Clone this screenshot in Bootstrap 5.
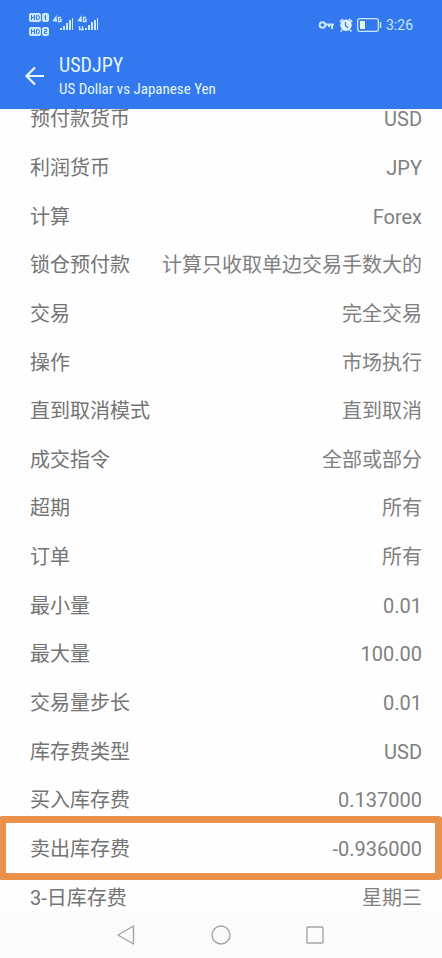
<!DOCTYPE html>
<html lang="zh-CN">
<head>
<meta charset="utf-8">
<meta name="viewport" content="width=device-width, initial-scale=1">
<title>USDJPY</title>
<link href="https://cdn.jsdelivr.net/npm/bootstrap@5.3.0/dist/css/bootstrap.min.css" rel="stylesheet">
<style>
body { font-family: Roboto, "Noto Sans CJK SC", sans-serif; color: #747474; background: #fefefe; }
.top-area { background: #3478f0; color: #e2f6fc; z-index: 2; margin-bottom: -14px; }
.status-line { height: 50px; padding: 0 29px 0 28px; font-size: 14px; color: #c9e9f8; }
.title-line { height: 59px; padding: 0 24px 8px; gap: 13px; }
.symbol-name { font-family: "Roboto Condensed", "Liberation Sans Narrow", Roboto, sans-serif; font-size: 20px; line-height: 26px; font-weight: 400; }
.symbol-text { font-family: "Roboto Condensed", "Liberation Sans Narrow", Roboto, sans-serif; font-size: 15px; line-height: 22px; font-weight: 400; }
.spec-row { padding: 0 20px 0 30px; font-size: 20px; line-height: 28px; }
.spec-row dt, .spec-row dd { font-weight: 400; }
.spec-row dd { color: #808080; }
.spec-marked::after { content: ""; position: absolute; inset: -9px 0 -7px -1px; border: 7px solid #e9914b; border-radius: 3px; }
.system-keys { background: #fbfbfb; margin-top: -11px; height: 47px; padding: 0 113px; z-index: 1; }
svg { display: block; }
</style>
<script src="https://cdn.jsdelivr.net/npm/bootstrap@5.3.0/dist/js/bootstrap.bundle.min.js"></script>
</head>
<body>
<div class="d-flex flex-column min-vh-100">
  <header class="top-area position-relative">
    <div class="status-line d-flex align-items-center justify-content-between">
      <svg width="74" height="26" viewBox="0 0 74 26" fill="#c9e9f8" aria-hidden="true">
        <rect x="1" y="1" width="12" height="9" rx="2"/><rect x="14" y="1" width="7" height="9" rx="2"/>
        <rect x="1" y="15" width="12" height="9" rx="2"/><rect x="14" y="15" width="7" height="9" rx="2"/>
        <g fill="none" stroke="#3478f0"><path d="M3.500 3v5M6.500 3v5M3.500 5.500h3M8.500 3.500v4h1q2 0 2-2t-2-2zM16.500 4.500l1-1v4.500"/><path d="M3.500 17v5M6.500 17v5M3.500 19.500h3M8.500 17.500v4h1q2 0 2-2t-2-2zM16 17.500h2.500v2H16.500v2H19"/></g>
        <g fill="none" stroke="#c9e9f8" stroke-width="1.300"><path d="M28 10V5l-2.500 3.500H29M33 5.500h-2.500v4H33V7.500h-1M53 10V5l-2.500 3.500H54M58 5.500h-2.500v4H58V7.500h-1M51.500 14v3.500h3V14M54.500 17.500l1.500 0"/></g>
        <path d="M32 16h2v2h-2zM35 14h2v4h-2zM38 11h2v7h-2zM41 8h2v10h-2zM44 6h1v12h-1zM57 16h2v2h-2zM60 13h2v5h-2zM63 10h2v8h-2zM66 8h2v10h-2zM69 6h1v12h-1z"/>
      </svg>
      <div class="d-flex align-items-center gap-1">
        <svg width="17" height="12" viewBox="0 0 17 12" fill="none" stroke="#c9e9f8" stroke-width="2" aria-hidden="true"><circle cx="4.500" cy="6" r="2.800"/><path d="M7.500 5.500H16M14 6v4M11 6v2"/></svg>
        <svg width="14" height="14" viewBox="0 0 14 14" aria-hidden="true"><circle cx="7" cy="7.300" r="5.700" fill="#dff3fb"/><path d="M.8 4L4 1M10 1l3.200 3M3 12l-1.300 1.500M11 12l1.300 1.500" stroke="#dff3fb" stroke-width="1.500"/><path d="M6.500 4v3.500L9 10" fill="none" stroke="#3478f0" stroke-width="1.300"/></svg>
        <svg width="25" height="14" viewBox="0 0 25 14" aria-hidden="true"><rect x=".7" y=".7" width="20.600" height="12.600" rx="2" fill="none" stroke="#c9e9f8" stroke-width="1.300"/><rect x="3" y="3" width="5" height="8" fill="#e2f6fc"/><path d="M23.500 4v6" stroke="#c9e9f8" stroke-width="1.500"/></svg>
        <span>3:26</span>
      </div>
    </div>
    <div class="title-line d-flex align-items-center">
      <button type="button" class="btn p-0 border-0" aria-label="返回">
        <svg width="22" height="22" viewBox="0 0 22 22" fill="none" stroke="#e2f6fc" stroke-width="2.200"><path d="M20 11H2.500M11 2.500L2.500 11l8.500 8.500"/></svg>
      </button>
      <div>
        <h1 class="symbol-name m-0">USDJPY</h1>
        <p class="symbol-text m-0">US Dollar vs Japanese Yen</p>
      </div>
    </div>
  </header>
  <main class="flex-fill d-flex flex-column">
    <dl class="flex-fill d-flex flex-column m-0">
      <div class="spec-row d-flex flex-fill align-items-center justify-content-between"><dt>预付款货币</dt><dd class="m-0">USD</dd></div>
      <div class="spec-row d-flex flex-fill align-items-center justify-content-between"><dt>利润货币</dt><dd class="m-0">JPY</dd></div>
      <div class="spec-row d-flex flex-fill align-items-center justify-content-between"><dt>计算</dt><dd class="m-0">Forex</dd></div>
      <div class="spec-row d-flex flex-fill align-items-center justify-content-between"><dt>锁仓预付款</dt><dd class="m-0">计算只收取单边交易手数大的</dd></div>
      <div class="spec-row d-flex flex-fill align-items-center justify-content-between"><dt>交易</dt><dd class="m-0">完全交易</dd></div>
      <div class="spec-row d-flex flex-fill align-items-center justify-content-between"><dt>操作</dt><dd class="m-0">市场执行</dd></div>
      <div class="spec-row d-flex flex-fill align-items-center justify-content-between"><dt>直到取消模式</dt><dd class="m-0">直到取消</dd></div>
      <div class="spec-row d-flex flex-fill align-items-center justify-content-between"><dt>成交指令</dt><dd class="m-0">全部或部分</dd></div>
      <div class="spec-row d-flex flex-fill align-items-center justify-content-between"><dt>超期</dt><dd class="m-0">所有</dd></div>
      <div class="spec-row d-flex flex-fill align-items-center justify-content-between"><dt>订单</dt><dd class="m-0">所有</dd></div>
      <div class="spec-row d-flex flex-fill align-items-center justify-content-between"><dt>最小量</dt><dd class="m-0">0.01</dd></div>
      <div class="spec-row d-flex flex-fill align-items-center justify-content-between"><dt>最大量</dt><dd class="m-0">100.00</dd></div>
      <div class="spec-row d-flex flex-fill align-items-center justify-content-between"><dt>交易量步长</dt><dd class="m-0">0.01</dd></div>
      <div class="spec-row d-flex flex-fill align-items-center justify-content-between"><dt>库存费类型</dt><dd class="m-0">USD</dd></div>
      <div class="spec-row d-flex flex-fill align-items-center justify-content-between"><dt>买入库存费</dt><dd class="m-0">0.137000</dd></div>
      <div class="spec-row spec-marked position-relative d-flex flex-fill align-items-center justify-content-between"><dt>卖出库存费</dt><dd class="m-0">-0.936000</dd></div>
      <div class="spec-row d-flex flex-fill align-items-center justify-content-between"><dt>3-日库存费</dt><dd class="m-0">星期三</dd></div>
    </dl>
  </main>
  <nav class="system-keys position-relative d-flex align-items-center justify-content-between" aria-label="系统导航">
    <button type="button" class="btn p-0 border-0" aria-label="返回键"><svg width="24" height="22" viewBox="0 0 24 22" fill="none" stroke="#a5a5a5" stroke-width="1.400" stroke-linejoin="round"><path d="M20.500 2v18L5 11z"/></svg></button>
    <button type="button" class="btn p-0 border-0" aria-label="主屏幕"><svg width="22" height="22" viewBox="0 0 22 22" fill="none" stroke="#a5a5a5" stroke-width="1.400"><circle cx="11" cy="11" r="9"/></svg></button>
    <button type="button" class="btn p-0 border-0" aria-label="最近任务"><svg width="24" height="22" viewBox="0 0 24 22" fill="none" stroke="#a5a5a5" stroke-width="1.400"><rect x="2" y="3" width="16" height="16" rx="1"/></svg></button>
  </nav>
</div>
</body>
</html>
